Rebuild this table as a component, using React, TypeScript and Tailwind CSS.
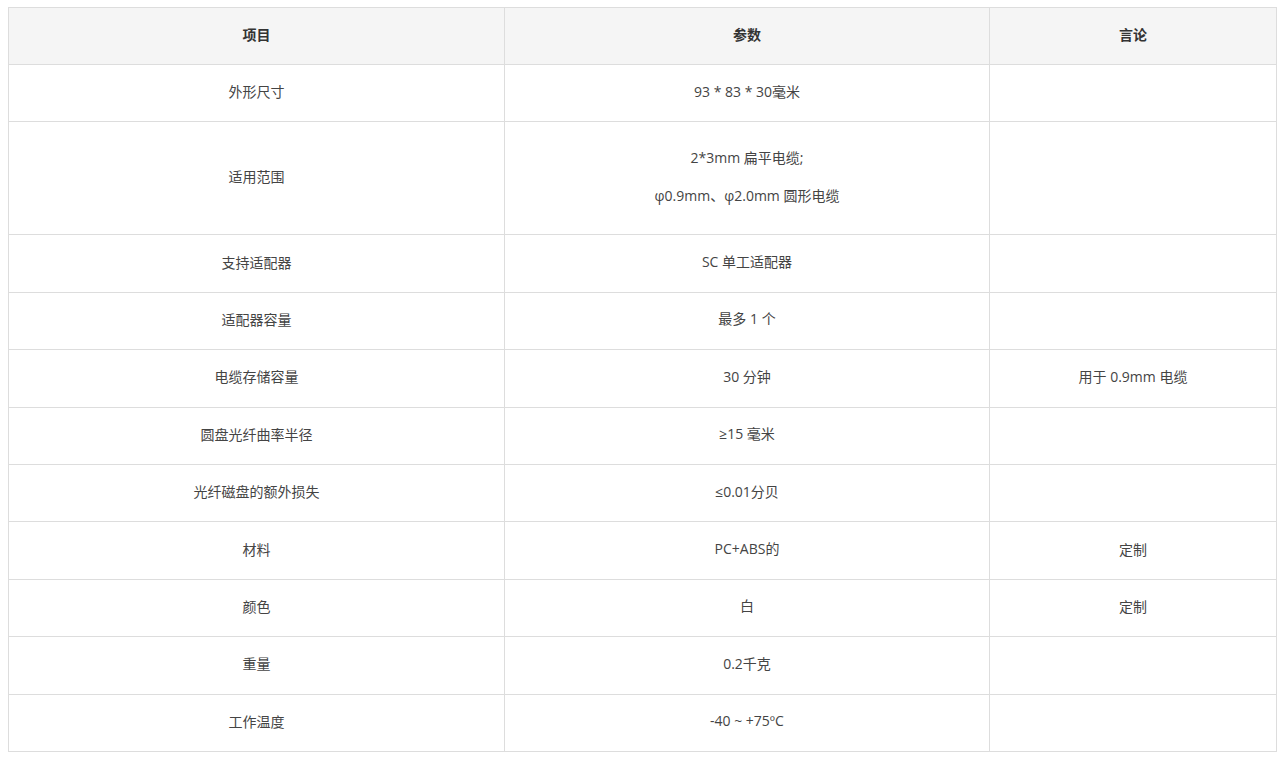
const rows: [string, string[], string][] = [
  ["外形尺寸", ["93 * 83 * 30毫米"], ""],
  ["适用范围", ["2*3mm 扁平电缆;", "φ0.9mm、φ2.0mm 圆形电缆"], ""],
  ["支持适配器", ["SC 单工适配器"], ""],
  ["适配器容量", ["最多 1 个"], ""],
  ["电缆存储容量", ["30 分钟"], "用于 0.9mm 电缆"],
  ["圆盘光纤曲率半径", ["≥15 毫米"], ""],
  ["光纤磁盘的额外损失", ["≤0.01分贝"], ""],
  ["材料", ["PC+ABS的"], "定制"],
  ["颜色", ["白"], "定制"],
  ["重量", ["0.2千克"], ""],
  ["工作温度", ["-40 ~ +75ºC"], ""],
];

export default function App() {
  return (
    <div className="bg-white w-[1278px] h-[757px] pt-[7px] pl-[8px] font-['Open_Sans','Noto_Sans_CJK_SC',sans-serif] text-[14px] text-[#444]">
      <table className="w-[1268px] border-collapse table-fixed">
        <colgroup>
          <col className="w-[496px]" />
          <col className="w-[485px]" />
          <col className="w-[287px]" />
        </colgroup>
        <thead>
          <tr className="bg-[#f5f5f5] h-[57px]">
            {["项目", "参数", "言论"].map((h) => (
              <th key={h} className="border border-[#dddddd] pb-[4px] font-bold text-[#333] text-center">
                {h}
              </th>
            ))}
          </tr>
        </thead>
        <tbody>
          {rows.map(([name, vals, note]) => (
            <tr key={name} className={vals.length > 1 ? "h-[113px]" : "h-[57.4px]"}>
              <td className="border border-[#dddddd] pb-[3px] text-center">{name}</td>
              <td className="border border-[#dddddd] pb-[3px] text-center">
                {vals.map((v, i) => (
                  <p key={i} className={i > 0 ? "mt-[18px] leading-[20px]" : "leading-[20px]"}>
                    {v}
                  </p>
                ))}
              </td>
              <td className="border border-[#dddddd] pb-[3px] text-center">{note}</td>
            </tr>
          ))}
        </tbody>
      </table>
    </div>
  );
}
